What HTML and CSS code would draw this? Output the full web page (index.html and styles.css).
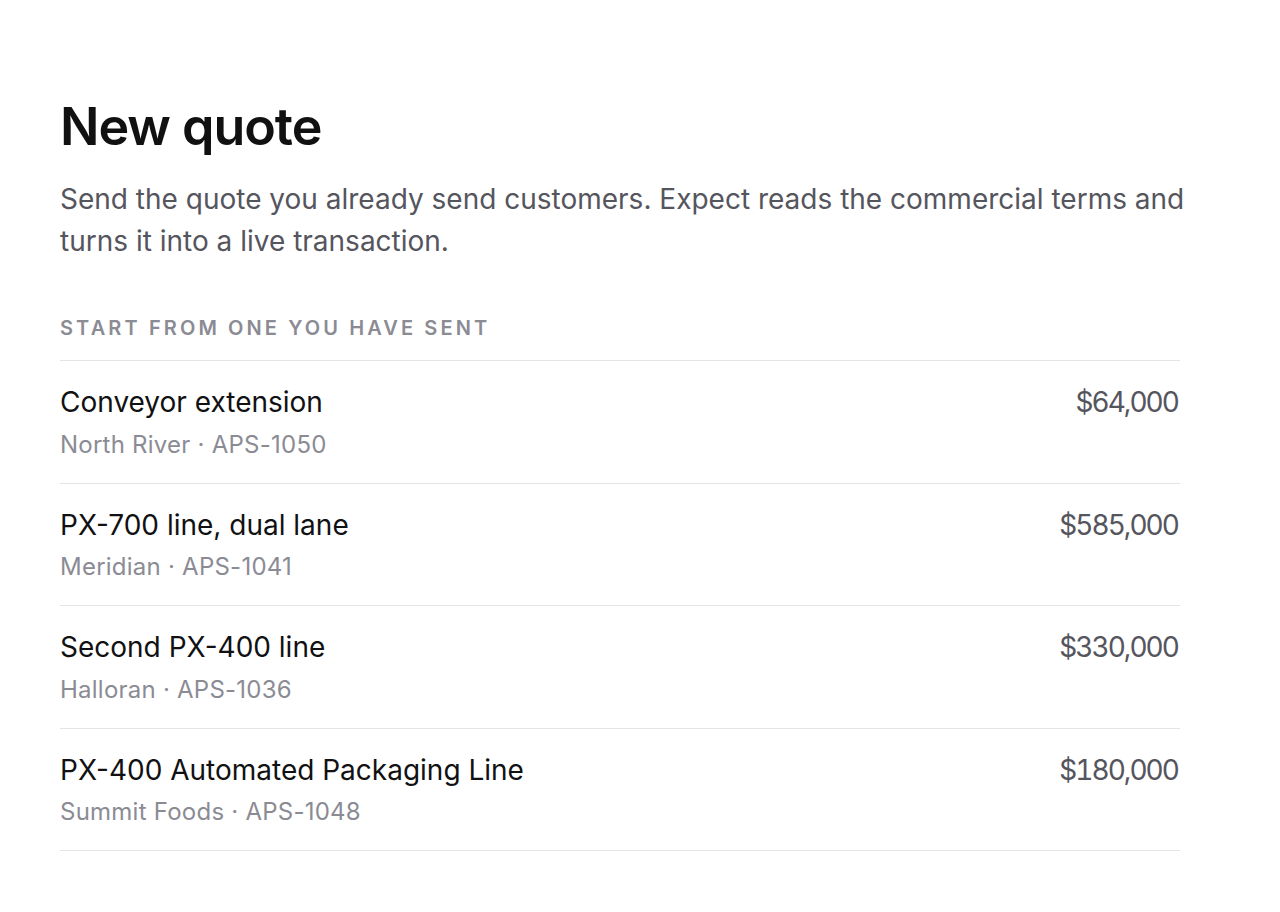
FILE: index.html
```html
<!DOCTYPE html>
<html lang="en">
<head>
<meta charset="utf-8">
<title>New quote</title>
<link rel="stylesheet" href="styles.css">
</head>
<body>
<main class="page">
  <h1 class="title">New quote</h1>
  <p class="lead">Send the quote you already send customers. Expect reads the commercial terms and turns it into a live transaction.</p>
  <section class="recent">
    <h2 class="label">Start from one you have sent</h2>
    <ul class="list">
      <li class="row">
        <div class="info">
          <div class="name">Conveyor extension</div>
          <div class="meta">North River · APS-1050</div>
        </div>
        <div class="amount">$64,000</div>
      </li>
      <li class="row">
        <div class="info">
          <div class="name">PX-700 line, dual lane</div>
          <div class="meta">Meridian · APS-1041</div>
        </div>
        <div class="amount">$585,000</div>
      </li>
      <li class="row">
        <div class="info">
          <div class="name">Second PX-400 line</div>
          <div class="meta">Halloran · APS-1036</div>
        </div>
        <div class="amount">$330,000</div>
      </li>
      <li class="row">
        <div class="info">
          <div class="name">PX-400 Automated Packaging Line</div>
          <div class="meta">Summit Foods · APS-1048</div>
        </div>
        <div class="amount">$180,000</div>
      </li>
    </ul>
  </section>
</main>
</body>
</html>
```
FILE: styles.css
```css
* { box-sizing: border-box; }
html, body { margin: 0; padding: 0; background: #ffffff; }
body {
  font-family: Inter, "Noto Sans", "Liberation Sans", sans-serif;
  color: #111113;
}
.page {
  padding: 96px 60px 40px 60px;
}
.title {
  margin: 0;
  font-size: 52px;
  line-height: 1.2;
  font-weight: 600;
  letter-spacing: -0.02em;
  color: #111111;
}
.lead {
  margin: 20px 0 0 0;
  font-size: 28px;
  line-height: 1.5;
  color: #55555e;
  max-width: 1140px;
}
.recent { margin-top: 52px; width: 1120px; }
.label {
  margin: 0 0 18px 0;
  font-size: 20px;
  line-height: 1.4;
  font-weight: 600;
  letter-spacing: 0.155em;
  text-transform: uppercase;
  color: #8b8b94;
}
.list { list-style: none; margin: 0; padding: 0; border-top: 1px solid #e4e4e1; }
.row {
  display: flex;
  justify-content: space-between;
  align-items: flex-start;
  padding: 20px 0 20px 0;
  border-bottom: 1px solid #e4e4e1;
}
.name { font-size: 28px; line-height: 1.5; color: #111113; }
.meta { font-size: 24px; line-height: 1.5; color: #8b8b94; margin-top: 3.5px; letter-spacing: 0.01em; }
.amount {
  font-size: 28px;
  line-height: 1.5;
  color: #55555e;
  font-variant-numeric: tabular-nums;
  letter-spacing: -0.07em;
  margin-right: 2px;
}
```
